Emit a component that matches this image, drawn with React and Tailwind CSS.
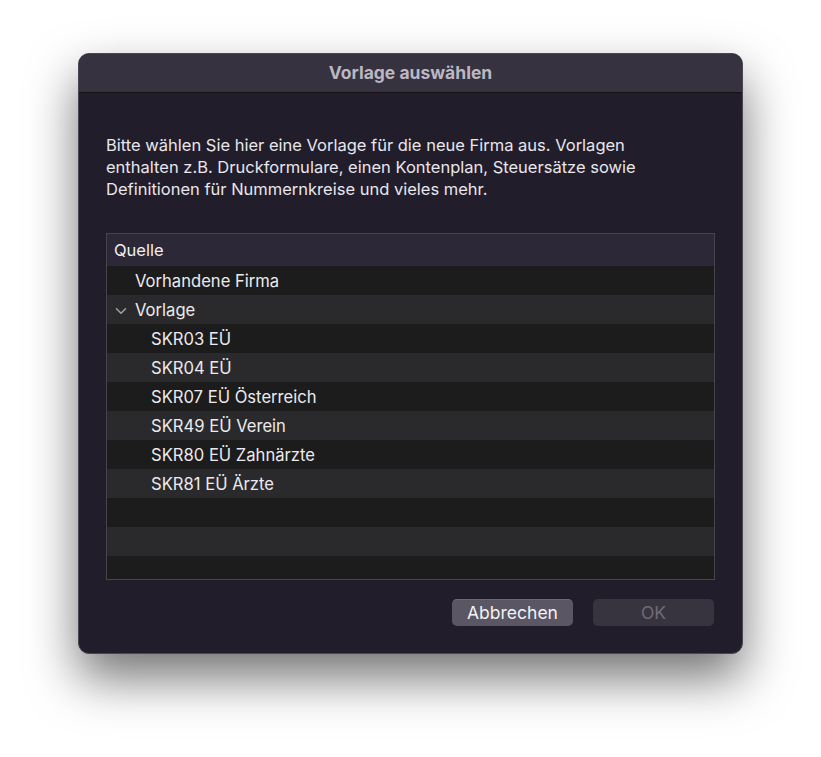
const rows = [
  { label: 'Vorhandene Firma', indent: 'pl-[28px]' },
  { label: 'Vorlage', indent: 'pl-[8px]', expand: true },
  { label: 'SKR03 EÜ', indent: 'pl-[44px]' },
  { label: 'SKR04 EÜ', indent: 'pl-[44px]' },
  { label: 'SKR07 EÜ Österreich', indent: 'pl-[44px]' },
  { label: 'SKR49 EÜ Verein', indent: 'pl-[44px]' },
  { label: 'SKR80 EÜ Zahnärzte', indent: 'pl-[44px]' },
  { label: 'SKR81 EÜ Ärzte', indent: 'pl-[44px]' },
  { label: '' },
  { label: '' },
  { label: '' },
];

function Disclosure() {
  return (
    <svg width="12" height="8" viewBox="0 0 12 8" className="mr-[8px] mt-[1px]">
      <path d="M1.5 1.8 L6 6.2 L10.5 1.8" fill="none" stroke="#a09da5" strokeWidth="1.6" strokeLinecap="round" strokeLinejoin="round" />
    </svg>
  );
}

export default function App() {
  return (
    <div
      className="min-h-[757px] bg-white pt-[53px] pl-[78px]"
      style={{ fontFamily: 'Inter, "Noto Sans", sans-serif' }}
    >
      <div className="w-[665px] h-[601px] rounded-[11px] bg-[#211d2b] border border-[#4a4652] overflow-hidden flex flex-col shadow-[0_24px_50px_rgba(0,0,0,0.55)]">
        {/* title bar */}
        <div className="h-[39px] flex-shrink-0 bg-[#37323f] border-b border-[#141119] flex items-center justify-center">
          <span className="text-[17.5px] font-bold text-[#bcb7c2]">Vorlage auswählen</span>
        </div>

        <div className="flex-1 flex flex-col px-[27px] pt-[41px]">
          <p className="text-[16.5px] leading-[22px] text-[#e9e6ec] whitespace-nowrap">
            Bitte wählen Sie hier eine Vorlage für die neue Firma aus. Vorlagen
            <br />
            enthalten z.B. Druckformulare, einen Kontenplan, Steuersätze sowie
            <br />
            Definitionen für Nummernkreise und vieles mehr.
          </p>

          {/* source list */}
          <div className="mt-[33px] h-[347px] border border-[#47444c] overflow-hidden flex flex-col">
            <div className="h-[32px] flex-shrink-0 bg-[#2c2837] flex items-center pl-[7px] pt-[1px] text-[16.5px] text-[#f1eff3]">
              Quelle
            </div>
            {rows.map((r, i) => (
              <div
                key={i}
                className={`h-[29px] flex-shrink-0 flex items-center pt-[2px] text-[16.6px] text-[#eceaee] ${i % 2 === 0 ? 'bg-[#1c1c1c]' : 'bg-[#2a2a2c]'} ${r.indent || ''}`}
              >
                {r.expand && <Disclosure />}
                {r.label}
              </div>
            ))}
          </div>

          <div className="mt-[19px] flex justify-end gap-[20px] pr-[1px]">
            <button className="w-[121px] h-[27px] rounded-[5px] bg-[#5b5664] text-[17.5px] leading-none text-[#f3f1f5] border-t border-[#6d6876]">
              Abbrechen
            </button>
            <button className="w-[121px] h-[27px] rounded-[5px] bg-[#38343f] text-[17.5px] leading-none text-[#6f6b76]">
              OK
            </button>
          </div>
        </div>
      </div>
    </div>
  );
}
